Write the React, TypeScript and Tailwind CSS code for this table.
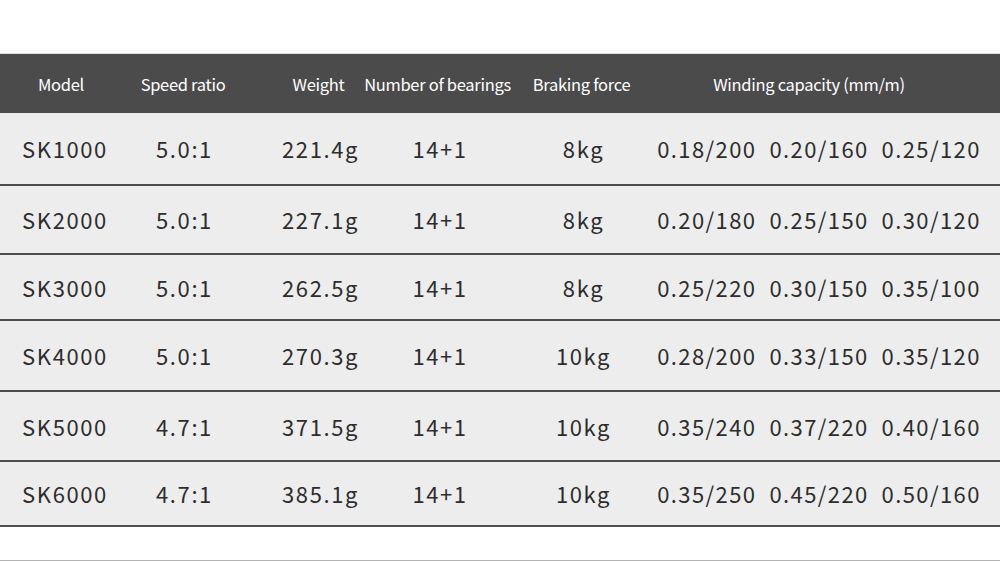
const headers = [
    { label: 'Model', width: 'w-[122px]' },
    { label: 'Speed ratio', width: 'w-[122px]' },
    { label: 'Weight', width: 'w-[149px]' },
    { label: 'Number of bearings', width: 'w-[89px]' },
    { label: 'Braking force', width: 'w-[199px]' },
    { label: 'Winding capacity (mm/m)', width: 'w-[256px]' },
]

const widths = ['w-[130px]', 'w-[109px]', 'w-[163px]', 'w-[76px]', 'w-[211px]', 'w-[260px]']

const rows = [
    { h: 'h-[73px]', model: 'SK1000', ratio: '5.0:1', weight: '221.4g', bearings: '14+1', brake: '8kg', winding: ['0.18/200', '0.20/160', '0.25/120'] },
    { h: 'h-[69px]', model: 'SK2000', ratio: '5.0:1', weight: '227.1g', bearings: '14+1', brake: '8kg', winding: ['0.20/180', '0.25/150', '0.30/120'] },
    { h: 'h-[66px]', model: 'SK3000', ratio: '5.0:1', weight: '262.5g', bearings: '14+1', brake: '8kg', winding: ['0.25/220', '0.30/150', '0.35/100'] },
    { h: 'h-[71px]', model: 'SK4000', ratio: '5.0:1', weight: '270.3g', bearings: '14+1', brake: '10kg', winding: ['0.28/200', '0.33/150', '0.35/120'] },
    { h: 'h-[70px]', model: 'SK5000', ratio: '4.7:1', weight: '371.5g', bearings: '14+1', brake: '10kg', winding: ['0.35/240', '0.37/220', '0.40/160'] },
    { h: 'h-[65px]', model: 'SK6000', ratio: '4.7:1', weight: '385.1g', bearings: '14+1', brake: '10kg', winding: ['0.35/250', '0.45/220', '0.50/160'] },
]

function Cell({ width, children }: { width: string; children: React.ReactNode }) {
    return <div className={`${width} flex-none flex justify-center whitespace-nowrap`}>{children}</div>
}

export default function App() {
    return (
        <div className="w-[1000px] h-[562px] overflow-hidden bg-white font-['Noto_Sans_CJK_SC','Noto_Sans',sans-serif]">
            <div className="h-[54px] border-b border-[#dcdcdc]" />
            <div className="h-[59px] bg-[#4b4b4b] text-white text-[16.5px] flex items-center pt-[1px]">
                {headers.map((c) => (
                    <Cell key={c.label} width={c.width}>
                        <span className="tracking-[-0.3px]">{c.label}</span>
                    </Cell>
                ))}
            </div>
            {rows.map((r) => (
                <div
                    key={r.model}
                    className={`${r.h} bg-[#ededed] border-b-2 border-[#4e4e4e] text-[#2d2d2d] text-[22px] tracking-[1.6px] flex items-center`}
                >
                    <Cell width={widths[0]}>{r.model}</Cell>
                    <Cell width={widths[1]}>{r.ratio}</Cell>
                    <Cell width={widths[2]}>{r.weight}</Cell>
                    <Cell width={widths[3]}>{r.bearings}</Cell>
                    <Cell width={widths[4]}>{r.brake}</Cell>
                    <Cell width={widths[5]}>
                        <div className="flex gap-[13px] tracking-[1.4px]">
                            {r.winding.map((w, i) => (
                                <span key={i}>{w}</span>
                            ))}
                        </div>
                    </Cell>
                </div>
            ))}
            <div className="h-[34px] bg-white border-b border-[#b5b5b5]" />
        </div>
    )
}
